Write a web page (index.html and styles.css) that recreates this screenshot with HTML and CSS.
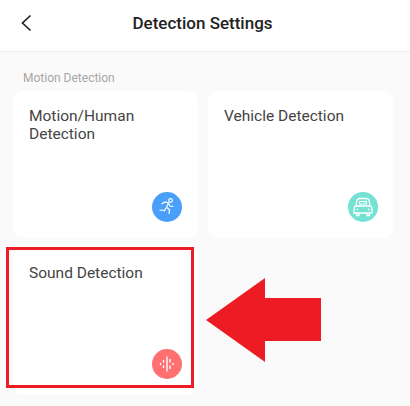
FILE: index.html
```html
<!DOCTYPE html>
<html lang="en">
<head>
    <meta charset="UTF-8">
    <title>Detection Settings</title>
    <link rel="stylesheet" href="styles.css">
</head>
<body>
    <div class="screen">
        <header class="top-bar">
            <svg class="back-icon" width="12" height="18" viewBox="0 0 12 18">
                <path d="M10.5 1.5 L2.5 9 L10.5 16.5" fill="none" stroke="#222" stroke-width="1.7"/>
            </svg>
            <h1>Detection Settings</h1>
        </header>

        <div class="section-label">Motion Detection</div>

        <div class="cards">
            <div class="card">
                <div class="card-title">Motion/Human Detection</div>
                <div class="card-icon blue">
                    <svg width="20" height="20" viewBox="0 0 20 20" fill="none" stroke="#fff" stroke-width="1.2">
                        <circle cx="13.5" cy="3.5" r="1.8"/>
                        <path d="M4.5 7 L8 5 L11.5 6 L9.5 10.5 L12.5 12.5 L12 17"/>
                        <path d="M9 11 L7.5 13.5 L2.5 13"/>
                        <path d="M11.5 6.5 L13 9 L16.5 9.5"/>
                    </svg>
                </div>
            </div>
            <div class="card">
                <div class="card-title">Vehicle Detection</div>
                <div class="card-icon teal">
                    <svg width="22" height="20" viewBox="0 0 22 20" fill="none" stroke="#fff" stroke-width="1.3">
                        <path d="M4 9 L4.8 4 Q5.2 1.5 7.5 1.5 L14.5 1.5 Q16.8 1.5 17.2 4 L18 9"/>
                        <path d="M4 9 Q2 9.5 2 11.5 L2 16 L20 16 L20 11.5 Q20 9.5 18 9 Z"/>
                        <path d="M4.5 16 V18.5 H7 V16 M15 16 V18.5 H17.5 V16"/>
                        <rect x="7.5" y="4.5" width="7" height="2.5" stroke-width="1"/>
                        <path d="M4.5 12.5 H6 M16 12.5 H17.5"/>
                    </svg>
                </div>
            </div>
            <div class="card">
                <div class="card-title">Sound Detection</div>
                <div class="card-icon coral">
                    <svg width="20" height="20" viewBox="0 0 20 20" fill="none" stroke="#fff" stroke-width="1.4" stroke-linecap="round">
                        <path d="M10 3 V17"/>
                        <path d="M6.5 6.5 V8 M6.5 12 V13.5"/>
                        <path d="M13 5.5 V8 M13 12 V14.5"/>
                        <path d="M3.5 9.5 V10.5 M16 9.5 V10.5"/>
                    </svg>
                </div>
            </div>
        </div>

        <!-- annotation drawn over the screenshot -->
        <div class="highlight-box"></div>
        <svg class="red-arrow" width="116" height="86" viewBox="0 0 116 86">
            <path d="M0 43 L59 1 L59 21 L115 21 L115 64 L59 64 L59 85 Z" fill="#ed1c24"/>
        </svg>
    </div>
</body>
</html>
```

FILE: styles.css
```css
* {
    margin: 0;
    padding: 0;
    box-sizing: border-box;
    font-family: Roboto, 'Noto Sans', sans-serif;
}

body {
    background: #fafafa;
    overflow: hidden;
}

.screen {
    position: relative;
    width: 410px;
    height: 406px;
    background: #fafafa;
}

.top-bar {
    height: 52px;
    display: flex;
    align-items: center;
    justify-content: center;
    position: relative;
    background: white;
    border-bottom: 1px solid #f0f0f0;
}

.back-icon {
    position: absolute;
    left: 20px;
    top: 14px;
}

h1 {
    font-size: 17px;
    font-weight: 500;
    color: #222;
    margin: -5px 5px 0 0;
}

.section-label {
    font-size: 12px;
    color: #a6a6a6;
    padding: 19px 0 0 23px;
    line-height: 14px;
    height: 39px;
}

.cards {
    display: grid;
    grid-template-columns: 185px 185px;
    grid-auto-rows: 147px;
    gap: 10px;
    padding-left: 13px;
}

.card {
    position: relative;
    background: white;
    border-radius: 10px;
    padding: 16px;
}

.card-title {
    font-size: 15.5px;
    line-height: 18px;
    color: #444;
    max-width: 125px;
}

.card-icon {
    position: absolute;
    right: 16px;
    bottom: 16px;
    width: 30px;
    height: 30px;
    border-radius: 50%;
    display: flex;
    align-items: center;
    justify-content: center;
}

.blue { background: #4a9ffa; }
.teal { background: #74e2d2; right: 15px; }
.coral { background: #ff7072; }

.highlight-box {
    position: absolute;
    left: 6px;
    top: 247px;
    width: 188px;
    height: 141px;
    border: 3px solid #ed1c24;
}

.red-arrow {
    position: absolute;
    left: 206px;
    top: 277px;
}
```
